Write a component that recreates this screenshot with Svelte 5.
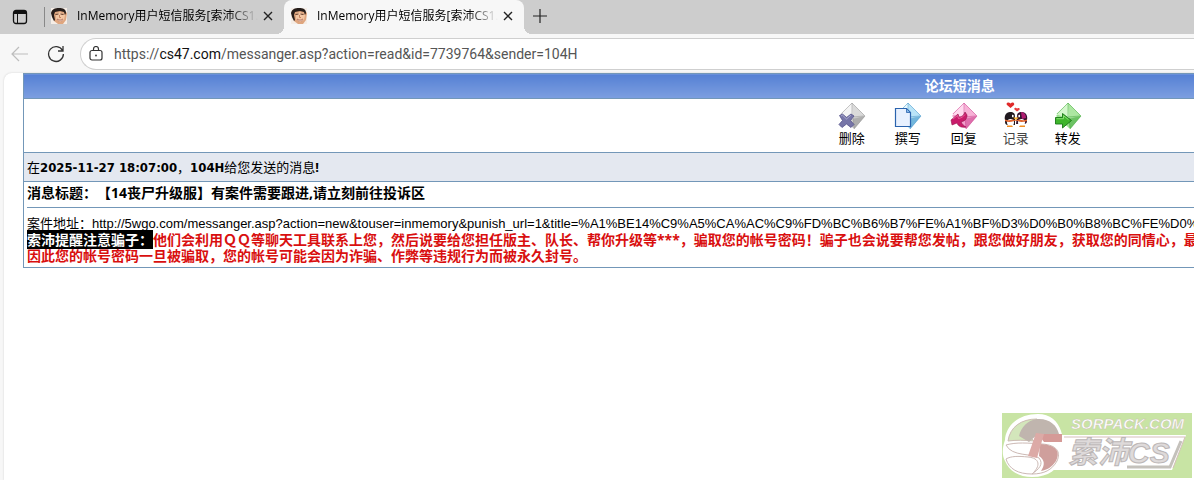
<script lang="ts">
  /**
   * Browser window with the forum's private message page open.
   */
  const tabs = [
    { title: 'InMemory用户短信服务[索沛CS1.6]', active: false },
    { title: 'InMemory用户短信服务[索沛CS1.6]', active: true },
  ];

  const actions = [
    { id: 'delete', label: '删除' },
    { id: 'write', label: '撰写' },
    { id: 'reply', label: '回复' },
    { id: 'log', label: '记录' },
    { id: 'forward', label: '转发' },
  ];

  // envelope gradient per action: light, mid, dark
  const envelope: Record<string, string[]> = {
    delete: ['#f4f4f4', '#cfcfcf', '#8d8d8d'],
    write: ['#e6f9ff', '#a5dcf5', '#3f8fc4'],
    reply: ['#ffd9ee', '#f3a0cc', '#c93d8c'],
    forward: ['#d4f7cc', '#9be08f', '#3ea537'],
  };

  let address = $state('/messanger.asp?action=read&id=7739764&sender=104H');
</script>

{#snippet face()}
  <svg class="face" width="16" height="16" viewBox="0 0 16 16" aria-hidden="true">
    <rect width="16" height="16" fill="#f5ede6" />
    <path d="M2 5 3 13 7 16h5l3-4 1-7-4-4H4z" fill="#dfa67f" />
    <path d="M5 6 9 4l5 3-1 5-4 2-4-3z" fill="#f3c7a4" />
    <path d="M0 5C1 1 4 0 8 0c4 0 7 1 7 5l-1 2-1-3-4-1-5 1-1 3 1 5-1 1-2-4z" fill="#261d1a" />
    <path d="M4.500 6.500l3-.5M9.500 6l3 .5" stroke="#5c3524" stroke-width="1" />
    <path d="M8.500 7v2.500h1.500" stroke="#b8714f" fill="none" stroke-width=".8" />
    <path d="M6 11q3 2 6 0l-1 1.800H7.500z" fill="#fff" stroke="#a9604a" stroke-width=".6" />
  </svg>
{/snippet}

{#snippet actionIcon(id: string)}
  <svg width="28" height="28" viewBox="0 0 28 28" aria-hidden="true">
    {#if id === 'log'}
      <path d="M8.500 6 5 3C3.500 1 6.500-.5 8.500 1.500 10.500-.5 13 1 12 3z" fill="#e02a2a" />
      <path d="M15 9.500 12.500 7.500c-.8-1.500 1.300-2.300 2.500-1 1.500-1.300 3.400 0 2.500 1.200z" fill="#e93e3e" />
      <path d="M3 18c-1-4 1-8 5-8 4 0 5 2 5 4v9H5c-2-1-2-2-2-4z" fill="#211a20" />
      <path d="M15 14c0-2 1-4 5-4s6 4 5 8c0 2 0 3-2 4h-9z" fill="#33152f" />
      <path d="M19 10c4 0 5 4 5 6l-4 1z" fill="#b01c72" />
      <ellipse cx="8.500" cy="20.500" rx="3.500" ry="3.500" fill="#fff" />
      <ellipse cx="19.500" cy="20.500" rx="3.500" ry="3.500" fill="#fff" />
      <path d="M3 17.500q3 1.500 8 0l3 1 3-1q5 1.500 8 0v1.500q-6 2-9 0h-4q-5 2-9 0z" fill="#e0642e" />
      <path d="M10 12.500l2.500 1.500-2.500 1.500zM18 12.500 15.500 14l2.500 1.500z" fill="#fff" />
      <path d="M11 15.500h6l-3 2.500z" fill="#ffb52d" />
      <path d="M5 23.500h5l1 1.500H5zM18 23.500h5V25h-6z" fill="#f08d20" />
    {:else}
      <path d="M14 1 27 14 16 27 2 14z" fill={envelope[id][1]} />
      <path d="M14 1 27 14 15 17 2 12z" fill={envelope[id][0]} />
      <path d="M14 1 27 14 15 16z" fill={envelope[id][1]} opacity=".7" />
      <path d="M27 14 16 27 15 16z" fill={envelope[id][2]} opacity=".5" />
      <path d="M14 1 27 14 16 27M3 12 14 1v14l12-1M15 16l1 10" fill="none" stroke={envelope[id][2]} stroke-width=".6" opacity=".8" />
      {#if id === 'delete'}
        <path d="m1.500 13.500 3-1.500 4 3.500L13 12l3 2-3.500 4.500 3.500 4-3 3-4.500-3.500L4 25.500l-3-3 3.500-4z" fill="#7776a8" stroke="#55538a" stroke-width=".8" />
        <path d="m3 14 1.500-.8 4 3.800 4.500-3.800" fill="none" stroke="#b3b2d6" stroke-width=".8" />
      {:else if id === 'write'}
        <path d="M1.500 6.500h11l4 4v14h-15z" fill="#e8f1ff" stroke="#2a63ae" stroke-width="1.200" />
        <path d="M12.500 6.500v4h4z" fill="#85b7e8" stroke="#2a63ae" stroke-width=".8" />
      {:else if id === 'reply'}
        <path d="m1 18 7-6 1 3c3 0 5-2 6-5l2 3c0 4-2 6-6 7 1 2 3 4 5 5-5 1-8-1-9-4l-5 2z" fill="#c91c6b" stroke="#93104c" stroke-width=".6" />
        <path d="m3 17 4.500-3.500 1 3c3-.5 5-2 6.500-4" fill="none" stroke="#ee69a5" stroke-width=".8" />
      {:else}
        <path d="M1.500 15.500h7v-4l9 7-9 7.500v-4h-7z" fill="#3fb52c" stroke="#187816" stroke-width=".9" />
        <path d="M2.500 16.700h7v-3l5 4" fill="none" stroke="#8ce278" stroke-width=".9" />
      {/if}
    {/if}
  </svg>
{/snippet}

<div class="window">
  <div class="tab-bar">
    <button class="tab-menu" aria-label="Tab actions">
      <svg width="16" height="16" viewBox="0 0 16 16" fill="none" stroke="#111" aria-hidden="true">
        <rect x="1.500" y="1.500" width="13" height="13" rx="2.500" stroke-width="1.300" />
        <path d="M2 3.500h12" stroke-width="3" />
        <path d="M5.500 5v9" />
      </svg>
    </button>
    {#each tabs as tab}
      <div class="tab" class:active={tab.active}>
        {@render face()}
        <span class="tab-title">{tab.title}</span>
        <button class="close" aria-label="Close tab">
          <svg width="10" height="10" viewBox="0 0 10 10" stroke="#222" stroke-width="1.400" aria-hidden="true">
            <path d="m1 1 8 8M9 1 1 9" />
          </svg>
        </button>
      </div>
    {/each}
    <button class="new-tab" aria-label="New tab">
      <svg width="14" height="14" viewBox="0 0 14 14" stroke="#222" stroke-width="1.200" aria-hidden="true">
        <path d="M7 0v14M0 7h14" />
      </svg>
    </button>
  </div>

  <div class="toolbar">
    <button class="nav" aria-label="Back" disabled>
      <svg width="18" height="16" viewBox="0 0 18 16" fill="none" stroke="#bdbdbd" stroke-width="1.200" aria-hidden="true">
        <path d="M17 8H1.500M8 1 1 8l7 7" />
      </svg>
    </button>
    <button class="nav" aria-label="Refresh">
      <svg width="18" height="18" viewBox="0 0 18 18" fill="none" stroke="#333" stroke-width="1.300" aria-hidden="true">
        <path d="M15.500 5.500A7.400 7.400 0 1 0 16.400 9M16 1v5h-5" />
      </svg>
    </button>
    <label class="address">
      <svg width="14" height="16" viewBox="0 0 14 16" fill="none" stroke="#333" stroke-width="1.200" aria-hidden="true">
        <rect x="1" y="4.500" width="12" height="9.500" rx="2" />
        <path d="M4.500 4.500V3a2.500 2.500 0 0 1 5 0v1.500" />
        <circle cx="7" cy="9.500" r=".9" fill="#333" stroke="none" />
      </svg>
      <span class="origin">https://<b>cs47.com</b></span>
      <input type="text" aria-label="Address" bind:value={address} />
    </label>
  </div>

  <main class="page">
    <table class="message">
      <thead>
        <tr><th>论坛短消息</th></tr>
      </thead>
      <tbody>
        <tr>
          <td>
            <nav class="actions">
              {#each actions as action}
                <a href="#{action.id}" class={action.id}>
                  {@render actionIcon(action.id)}
                  <span>{action.label}</span>
                </a>
              {/each}
            </nav>
          </td>
        </tr>
        <tr class="sender">
          <td>在<b class="latin">2025-11-27 18:07:00</b>，<b class="latin">104H</b>给您发送的消息<b>!</b></td>
        </tr>
        <tr>
          <td class="body">
            <p class="subject">消息标题：【14丧尸升级服】有案件需要跟进,请立刻前往投诉区</p>
            <hr />
            <p>案件地址：<span class="url">http://5wgo.com/messanger.asp?action=new&amp;touser=inmemory&amp;punish_url=1&amp;title=%A1%BE14%C9%A5%CA%AC%C9%FD%BC%B6%B7%FE%A1%BF%D3%D0%B0%B8%BC%FE%D0%E8%D2%AA</span></p>
            <p class="warning"><mark>索沛提醒注意骗子：</mark>他们会利用ＱＱ等聊天工具联系上您，然后说要给您担任版主、队长、帮你升级等***，骗取您的帐号密码！骗子也会说要帮您发帖，跟您做好朋友，获取您的同情心，最后</p>
            <p class="warning">因此您的帐号密码一旦被骗取，您的帐号可能会因为诈骗、作弊等违规行为而被永久封号。</p>
          </td>
        </tr>
      </tbody>
    </table>
  </main>

  <a class="brand" href="#home" aria-label="索沛CS">
    <svg width="190" height="65" viewBox="0 0 190 65" aria-hidden="true">
      <rect width="190" height="65" fill="#c8e4a4" />
      <path d="M58 22h126l-14 35H48z" fill="#fff" />
      <path d="M62 24h121l-12 31" fill="none" stroke="#d5bfba" stroke-width="1" />
      <path d="M179 28 168 54H125" fill="none" stroke="#c4c1bb" stroke-width="3" />
      <path d="M36 1C16 1 4 13 3 27c-3 8-3 16 0 21 4 10 14 16 27 16 17 0 26-8 29-18 3-8 3-20 0-28C56 8 48 1 36 1z" fill="#fff" />
      <path d="M35 6C19 6 8 14 6 28c8-1 16-1 26 0l-9-9 12-7z" fill="#d3e6bb" stroke="#cdbcb4" />
      <path d="M35 6c12-1 20 6 22 15H36l-9 8-10-6c2-9 9-16 18-17z" fill="#c0b5ae" />
      <path d="M36 21h24v8H42z" fill="#d59a97" />
      <path d="M4 32c10-3 22-2 36-1 15 1 19 8 15 17-5 9-13 13-25 13 7-5 12-10 7-16-7-5-27-1-33-13z" fill="#fff" stroke="#ccb9b4" />
      <path d="M38 31c16 1 21 7 16 17-4 6-9 9-15 10 4-6 4-11-2-15z" fill="#cf9f9c" />
      <path d="m34 20 8 1-7 24-9-2z" fill="#dcaaa6" />
      <path d="M4 46c5-3 12-3 22-2 12 1 13 9 4 17-14 0-23-5-26-15z" fill="#fff" stroke="#ccb9b4" />
      <text x="69" y="16" class="brand-domain">SORPACK.COM</text>
      <text x="66" y="50" class="brand-name">索沛CS</text>
    </svg>
  </a>
</div>

<style>
  :global(body) {
    margin: 0;
    background: #fff;
    overflow: hidden;
  }

  .window {
    min-height: 100vh;
    display: flex;
    flex-direction: column;
    background: #f7f7f7;
    font-family: 'Open Sans', 'Noto Sans CJK SC', sans-serif;
    color: #000;
    text-spacing-trim: space-all;
  }

  button {
    border: 0;
    padding: 0;
    background: none;
    display: flex;
    align-items: center;
    justify-content: center;
  }

  .tab-bar {
    display: flex;
    height: 34px;
    background: #cdcdcd;
  }

  .tab-menu {
    width: 40px;
    margin-right: 4px;
    flex: none;
  }

  .tab {
    position: relative;
    display: flex;
    align-items: center;
    box-sizing: border-box;
    width: 240px;
    padding: 0 6px 2px 7px;
    font-size: 12px;
    line-height: 20px;
  }

  .tab:not(.active)::before {
    content: '';
    width: 1px;
    height: 20px;
    background: #888;
    position: absolute;
    left: 0;
    top: 7px;
  }

  .tab.active {
    background: #f7f7f7;
    border-radius: 8px 8px 0 0;
  }

  .tab.active::before,
  .tab.active::after {
    content: '';
    position: absolute;
    bottom: 0;
    width: 8px;
    height: 8px;
  }

  .tab.active::before {
    right: 100%;
    background: radial-gradient(circle at 0 0, #cdcdcd 8px, #f7f7f7 8px);
  }

  .tab.active::after {
    left: 100%;
    background: radial-gradient(circle at 100% 0, #cdcdcd 8px, #f7f7f7 8px);
  }

  .face {
    flex: none;
    margin-right: 10px;
  }

  .tab-title {
    flex: 1;
    overflow: hidden;
    white-space: nowrap;
    mask-image: linear-gradient(to right, #000 84%, transparent);
  }

  .close {
    width: 20px;
    height: 20px;
  }

  .new-tab {
    width: 32px;
    height: 32px;
  }

  .toolbar {
    display: flex;
    align-items: center;
    gap: 18px;
    padding: 4px 0 3px 11px;
  }

  .nav {
    width: 18px;
    flex: none;
  }

  .address {
    flex: 1;
    display: flex;
    align-items: center;
    height: 30px;
    margin-left: -3px;
    padding-left: 8px;
    background: #fff;
    border: 1px solid #cfcfcf;
    border-right: 0;
    border-radius: 16px 0 0 16px;
    font-family: Roboto, sans-serif;
    font-size: 14px;
    color: #555;
  }

  .origin {
    margin-left: 11px;
  }

  .origin b {
    font-weight: 400;
    color: #111;
  }

  .address input {
    flex: 1;
    border: 0;
    padding: 0;
    outline: 0;
    background: none;
    font: inherit;
    color: inherit;
  }

  .page {
    flex: 1;
    margin-left: 4px;
    padding-left: 19px;
    background: #fff;
    border-radius: 8px 0 0 0;
    box-shadow: 0 0 2px #ccc;
    overflow: hidden;
  }

  .message {
    /* the forum page is wider than the window and runs off to the right */
    width: 160%;
    border-collapse: collapse;
    font-family: 'Noto Sans', 'Noto Sans CJK SC', sans-serif;
    font-size: 13px;
    line-height: 16px;
    white-space: nowrap;
  }

  th,
  td {
    border: 1px solid #7397b8;
    padding: 0 3px;
  }

  th {
    height: 24px;
    background: linear-gradient(#5580d4, #7d9fe0);
    color: #fff;
    font-size: 14px;
  }

  .actions {
    display: flex;
    justify-content: center;
    height: 53px;
  }

  .actions a {
    width: 56px;
    display: flex;
    flex-direction: column;
    align-items: center;
    padding-top: 3px;
    color: #000;
    text-decoration: none;
  }

  .actions .log {
    width: 48px;
    color: #444;
  }

  .sender td {
    height: 28px;
    background: #e4e8f0;
  }

  .latin {
    font-family: 'DejaVu Sans Condensed', 'Noto Sans', sans-serif;
  }

  .url {
    font-family: 'Liberation Sans', sans-serif;
  }

  .body {
    padding: 3px;
  }

  p {
    margin: 0;
  }

  hr {
    margin: 6px 0 7px;
    border: 0;
    border-top: 1px solid #7397b8;
  }

  .subject,
  .warning {
    font-size: 14px;
    font-weight: 700;
  }

  .warning {
    color: #d90f0f;
  }

  mark {
    background: #000;
    color: #fff;
  }

  .brand {
    position: fixed;
    right: 2px;
    bottom: 2px;
    display: flex;
  }

  .brand-domain,
  .brand-name {
    font-family: 'Liberation Sans', 'Noto Sans CJK SC', sans-serif;
    font-style: italic;
    font-weight: 700;
  }

  .brand-domain {
    font-size: 15px;
    fill: #fff;
    stroke: #c9c4b0;
    stroke-width: 0.5px;
  }

  .brand-name {
    font-size: 30px;
    fill: #dedada;
    stroke: #bbb6b6;
    stroke-width: 1px;
  }
</style>
